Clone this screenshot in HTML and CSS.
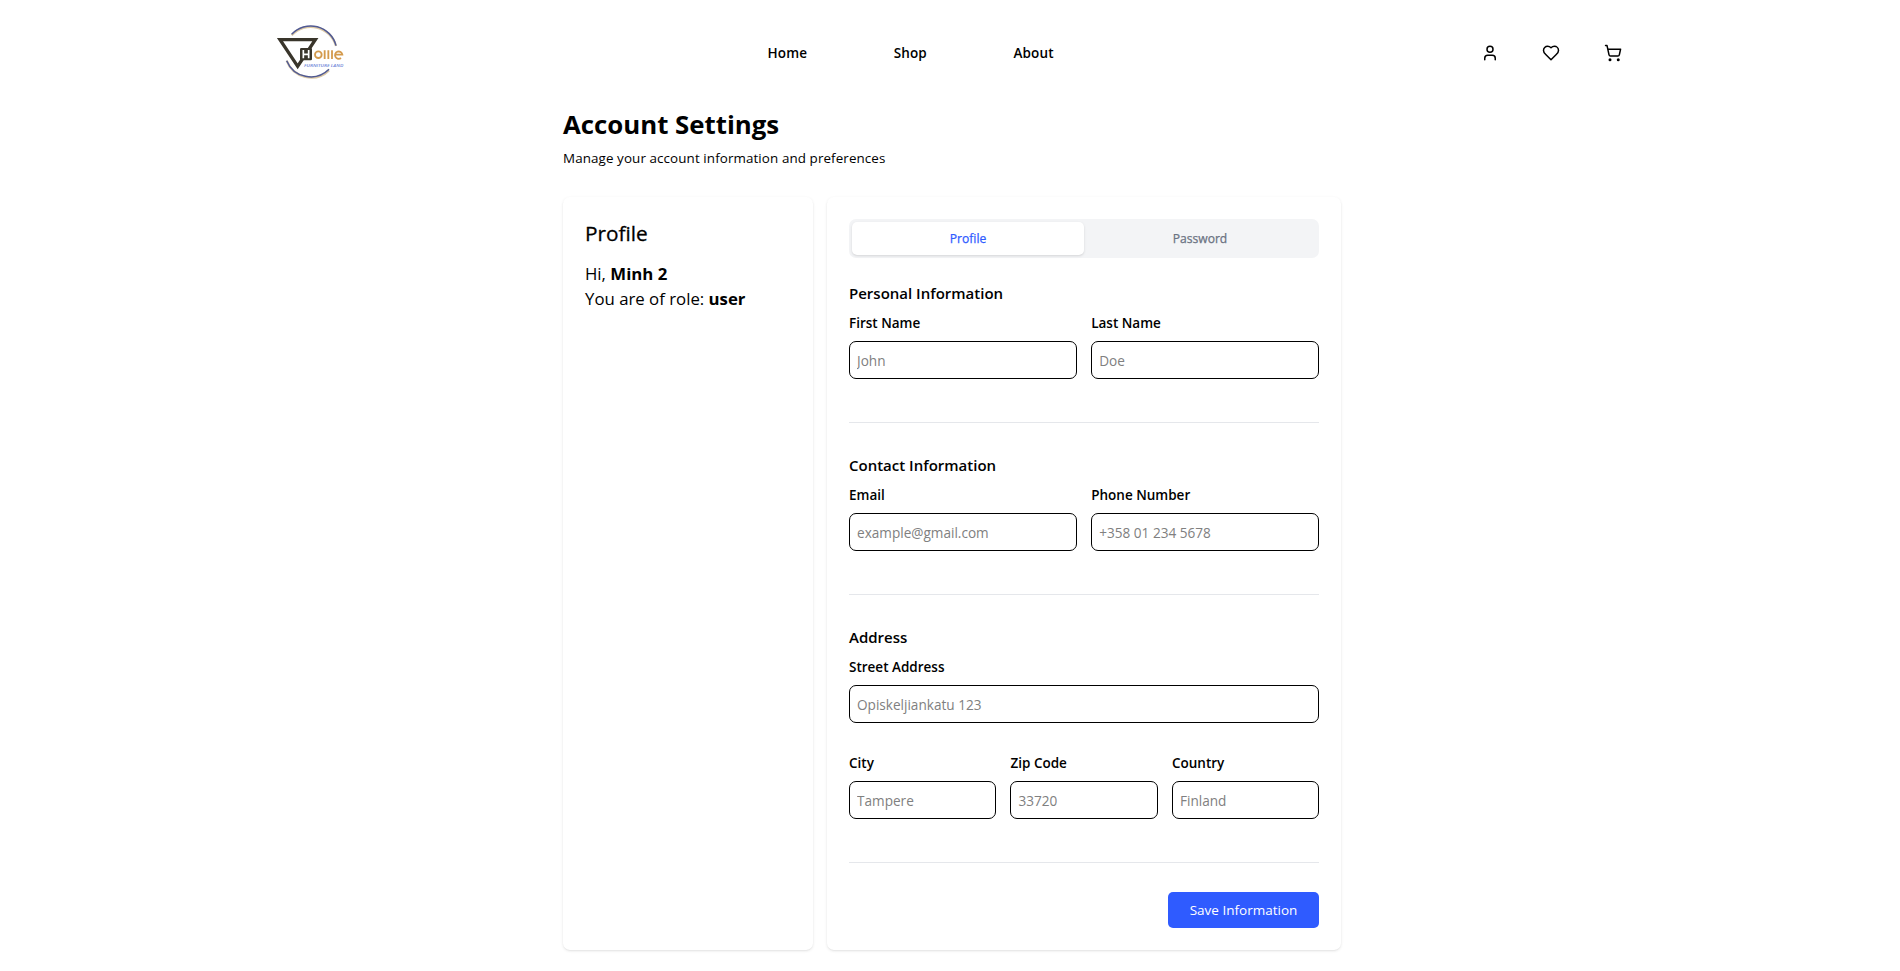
FILE: index.html
```html
<!DOCTYPE html>
<html lang="en">
<head>
<meta charset="utf-8">
<title>Account Settings</title>
<link rel="stylesheet" href="styles.css">
</head>
<body>
<header class="header">
  <a class="logo" href="#">
    <svg viewBox="0 0 270 225" width="90" height="75" fill="none">
      <path d="M80 61A78 78 0 0 1 213 93M65 137A78 78 0 0 0 192 166" stroke="#dcc9a5" stroke-width="7"/>
      <path d="M80 58A78 78 0 0 1 213 92M65 137A78 78 0 0 0 192 163" stroke="#505a94" stroke-width="4.5"/>
      <path d="M45 74H151L98 154Z" stroke="#39352b" stroke-width="10"/>
      <rect x="105" y="99" width="36" height="37" rx="4" fill="#39352b"/>
      <path d="M115 105v25M131 105v25M115 118h16" stroke="#fff" stroke-width="5"/>
      <g stroke="#d49a4c" stroke-width="5.5">
        <circle cx="160" cy="119" r="10"/>
        <path d="M179 106v26M190 106v26M201 106v26M212 119h20a11 11 0 1 0-4 10"/>
      </g>
      <text class="logo-tag" x="117" y="155" textLength="118" lengthAdjust="spacingAndGlyphs">FURNITURE LAND</text>
    </svg>
  </a>
  <nav class="nav"><a href="#">Home</a><a href="#">Shop</a><a href="#">About</a></nav>
  <div class="actions">
    <svg class="icon" viewBox="0 0 24 24"><path d="M19 21v-2a4 4 0 0 0-4-4H9a4 4 0 0 0-4 4v2"/><circle cx="12" cy="7" r="4"/></svg>
    <svg class="icon" viewBox="0 0 24 24"><path d="M19 14c1.49-1.46 3-3.21 3-5.5A5.5 5.5 0 0 0 16.5 3c-1.76 0-3 .5-4.5 2-1.5-1.5-2.74-2-4.5-2A5.5 5.5 0 0 0 2 8.5c0 2.3 1.5 4.05 3 5.5l7 7Z"/></svg>
    <svg class="icon" viewBox="0 0 24 24"><circle cx="8" cy="21" r="1"/><circle cx="19" cy="21" r="1"/><path d="M2.05 2.05h2l2.66 12.42a2 2 0 0 0 2 1.58h9.78a2 2 0 0 0 1.95-1.57l1.65-7.43H5.12"/></svg>
  </div>
</header>
<main class="main">
  <h1 class="title">Account Settings</h1>
  <p class="subtitle">Manage your account information and preferences</p>
  <div class="columns">
    <aside class="card side">
      <h2 class="side-title">Profile</h2>
      <p class="side-line">Hi, <b>Minh 2</b></p>
      <p class="side-line">You are of role: <b>user</b></p>
    </aside>
    <section class="card">
      <div class="tabs"><button class="tab active">Profile</button><button class="tab">Password</button></div>
      <form class="form">
        <div class="group">
          <h3 class="group-title">Personal Information</h3>
          <div class="row">
            <label class="field"><span class="label">First Name</span><input class="input" placeholder="John"></label>
            <label class="field"><span class="label">Last Name</span><input class="input" placeholder="Doe"></label>
          </div>
        </div>
        <div class="group">
          <h3 class="group-title">Contact Information</h3>
          <div class="row">
            <label class="field"><span class="label">Email</span><input class="input" placeholder="example@gmail.com"></label>
            <label class="field"><span class="label">Phone Number</span><input class="input" placeholder="+358 01 234 5678"></label>
          </div>
        </div>
        <div class="group last">
          <h3 class="group-title">Address</h3>
          <div class="row">
            <label class="field"><span class="label">Street Address</span><input class="input" placeholder="Opiskeljiankatu 123"></label>
          </div>
          <div class="row next">
            <label class="field"><span class="label">City</span><input class="input" placeholder="Tampere"></label>
            <label class="field"><span class="label">Zip Code</span><input class="input" placeholder="33720"></label>
            <label class="field"><span class="label">Country</span><input class="input" placeholder="Finland"></label>
          </div>
        </div>
        <div class="footer"><button class="save" type="button">Save Information</button></div>
      </form>
    </section>
  </div>
</main>
</body>
</html>
```
FILE: styles.css
```css
* { box-sizing: border-box; margin: 0; padding: 0; }
body {
  font-family: "Open Sans", "Noto Sans", sans-serif;
  font-size: 14px;
  color: #000;
  background: #fff;
  height: 971px;
  overflow: hidden;
}
a { color: inherit; text-decoration: none; }
button, input { font: inherit; border: 0; }
.header {
  width: 1370px;
  height: 106px;
  margin: 0 auto;
  display: grid;
  grid-template-columns: 502.5px 1fr auto;
  align-items: center;
}
.logo { display: block; height: 75px; margin-top: -1px; }
.logo-tag { font: italic 600 12px "Open Sans", sans-serif; fill: #6f86d8; }
.nav { display: flex; gap: 86.5px; font-size: 13.5px; font-weight: 600; letter-spacing: .15px; }
.actions { display: flex; gap: 43.5px; margin-right: 13px; }
.icon {
  width: 18px;
  height: 18px;
  fill: none;
  stroke: #000;
  stroke-width: 2;
  stroke-linecap: round;
  stroke-linejoin: round;
}
.icon:nth-child(2) { margin: 0 .5px 0 -.5px; }
.main { width: 778px; margin: 0 0 0 563px; }
.title { font-size: 25.8px; line-height: 36px; font-weight: 700; white-space: nowrap; }
.subtitle { font-size: 13.4px; line-height: 20px; margin-top: 6px; letter-spacing: .1px; }
.columns { display: grid; grid-template-columns: 250px 514px; gap: 14px; height: 752px; margin-top: 29px; }
.card {
  border-radius: 7px;
  padding: 22px;
  box-shadow: 0 1px 3px rgba(0, 0, 0, .1), 0 1px 2px -1px rgba(0, 0, 0, .1);
}
.side { padding-top: 21px; }
.side-title {
  font-size: 20.8px;
  line-height: 30px;
  font-weight: 500;
  margin-bottom: 13px;
  -webkit-text-stroke: .3px;
}
.side-line { font-size: 16.8px; line-height: 25px; white-space: nowrap; }
.tabs { display: flex; height: 39px; padding: 3px; border-radius: 7px; background: #f3f4f6; }
.tab {
  flex: 1;
  border-radius: 5px;
  background: none;
  color: #6a7282;
  font-size: 12.1px;
  font-weight: 500;
  -webkit-text-stroke: .25px;
}
.active { color: #2f5bff; background: #fff; box-shadow: 0 1px 3px rgba(0, 0, 0, .1), 0 1px 2px -1px rgba(0, 0, 0, .1); }
.form { padding-top: 24px; }
.group { border-bottom: 1px solid #e5e7eb; padding-bottom: 43px; margin-bottom: 31px; }
.last { margin-bottom: 29px; }
.group-title { font-size: 15px; line-height: 22px; font-weight: 600; margin-bottom: 9px; }
.row { display: flex; gap: 14.4px; }
.next { margin-top: 30px; }
.field { flex: 1; min-width: 0; }
.label { display: block; font-size: 13.5px; font-weight: 600; line-height: 20px; margin-bottom: 8px; }
.input {
  display: block;
  width: 100%;
  height: 38px;
  border: 1px solid #000;
  border-radius: 7px;
  padding: 0 7px;
  font-size: 13.6px;
  background: #fff;
}
.input::placeholder { color: #808080; }
.footer { display: flex; justify-content: flex-end; }
.save { width: 151px; height: 36px; border-radius: 5px; background: #2f5bff; color: #fff; font-size: 13.5px; font-weight: 500; }
```
